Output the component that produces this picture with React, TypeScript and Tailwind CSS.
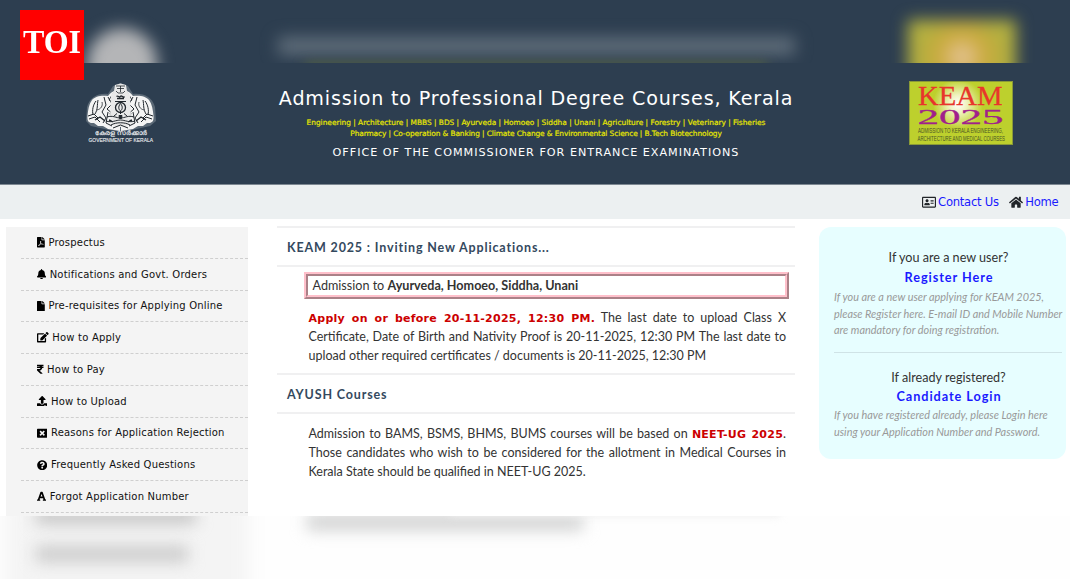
import type { ReactNode } from 'react';
import type { IconType } from 'react-icons';
import {
  FaBell,
  FaEdit,
  FaFile,
  FaFilePdf,
  FaFont,
  FaHome,
  FaQuestionCircle,
  FaRegAddressCard,
  FaRupeeSign,
  FaUpload,
  FaWindowClose,
} from 'react-icons/fa';

const menu: { icon: IconType; width: string; label: string }[] = [
  { icon: FaFilePdf, width: 'w-[7.8px]', label: 'Prospectus' },
  { icon: FaBell, width: 'w-[9.1px]', label: 'Notifications and Govt. Orders' },
  { icon: FaFile, width: 'w-[7.8px]', label: 'Pre-requisites for Applying Online' },
  { icon: FaEdit, width: 'w-[11.7px]', label: 'How to Apply' },
  { icon: FaRupeeSign, width: 'w-[6.5px]', label: 'How to Pay' },
  { icon: FaUpload, width: 'w-[10.4px]', label: 'How to Upload' },
  { icon: FaWindowClose, width: 'w-[10.4px]', label: 'Reasons for Application Rejection' },
  { icon: FaQuestionCircle, width: 'w-[10.4px]', label: 'Frequently Asked Questions' },
  { icon: FaFont, width: 'w-[9.1px]', label: 'Forgot Application Number' },
];

function ElephantSide() {
  return (
    <g>
      <path
        d="M31 7C27 8 24 10 22 13C16 12 9 13 6 17C3 21 2 27 1.5 33C1 38 3 40 6 40L8 40L12 43L17 43L22 46L34 48V8Z"
        fill="#f4f4f4"
      />
      <g fill="none" stroke="#20262c" strokeWidth="1">
        <path d="M10 18C7 22 6 27 7 32M12 17C11 22 12 26 9 31M18 14L20 22L16 29L20 35M22 14L26 21L21 26L27 31M28 9L26 13M2 33L8 31L12 35M3 36L9 34L14 39M20 35L17 40M22 29L20 40L26 43M27 24L24 31L29 37" />
        <path d="M16 19C17 23 15 26 11 27M26 12L23 17L30 22" strokeWidth="0.8" />
        <path d="M9 37L14 34L19 38M23 37L30 40" strokeWidth="1.4" />
      </g>
    </g>
  );
}

function StateEmblem() {
  return (
    <svg viewBox="0 0 70 62" className="h-[62px] w-[70px] overflow-visible" aria-label="Government of Kerala">
      <g opacity="0.3" fill="#c8cdd2">
        <path d="M27 3L34.5 0L42 3L47 11C58 10 66 14 69 24L70 38L64 43L46 47L34.5 49L23 47L5 43L0 38L1 24C4 14 12 10 22 11Z" />
      </g>
      <ElephantSide />
      <g transform="translate(69 0) scale(-1 1)">
        <ElephantSide />
      </g>
      <path d="M29 2L34.5 0.5L40 2L41 8L44 12L45 34L40 44H29L24 34L25 12L28 8Z" fill="#e9e9e9" />
      <g fill="none" stroke="#20262c" strokeWidth="1">
        <path d="M30 3H39M31 5.5H38M30 8L32 10H37L39 8M34.5 3V9" strokeWidth="0.8" />
        <path d="M30.5 13.5C32 11.8 33.5 15.5 34.5 13.3C36 11.8 37 15.5 38.5 13.5M31 15.5H38" strokeWidth="1.3" />
        <path d="M29 18.5H40" />
        <circle cx="34.5" cy="24.5" r="5" strokeWidth="1.3" />
        <path d="M34.5 20.5C31.5 24 33 27 34.5 28C36 27 37.5 24 34.5 20.5ZM34.5 28V31M31 30.5L28 33M38 30.5L41 33" />
        <path d="M21 34C27 32 30 35 34.5 35C39 35 42 32 48 34M20 38C26 40 30 37 34.5 37C39 37 43 40 49 38M25 42C30 39 39 39 44 42" />
        <path d="M33 32.5H36L35.5 35.5H33.5Z" fill="#20262c" />
        <path d="M27 45L34.5 42L42 45" />
      </g>
      <text x="9" y="52.4" textLength="52" lengthAdjust="spacingAndGlyphs" fontSize="6.6" fill="#eef0f2" stroke="#eef0f2" strokeWidth="0.15" fontFamily="sans-serif">
        കേരള സർക്കാർ
      </text>
      <text x="2.5" y="59.2" textLength="64.5" lengthAdjust="spacingAndGlyphs" fontSize="6" fill="#eef0f2" stroke="#eef0f2" strokeWidth="0.12" fontFamily="Liberation Sans, sans-serif">
        GOVERNMENT OF KERALA
      </text>
    </svg>
  );
}

function KeamBadge() {
  return (
    <svg viewBox="0 0 104 64" className="h-16 w-[104px] overflow-visible" aria-label="KEAM 2025">
      <defs>
        <radialGradient id="glow" gradientUnits="userSpaceOnUse" cx="49" cy="23" r="25">
          <stop offset="0" stopColor="#ffffff" />
          <stop offset="0.35" stopColor="#f0f3c0" />
          <stop offset="1" stopColor="#bdd02d" />
        </radialGradient>
      </defs>
      <rect x="0.4" y="0.4" width="103.2" height="63.2" fill="url(#glow)" stroke="#8c9c38" strokeWidth="0.8" />
      <text x="9" y="24" textLength="84.5" lengthAdjust="spacingAndGlyphs" fontSize="28" fill="#e8352b" stroke="#e8352b" strokeWidth="0.3" fontFamily="Liberation Serif, serif">
        KEAM
      </text>
      <text x="8.5" y="42.7" textLength="86" lengthAdjust="spacingAndGlyphs" fontSize="20" fill="#a0208c" stroke="#a0208c" strokeWidth="0.3" fontFamily="Liberation Serif, serif">
        2025
      </text>
      <g fontSize="6.4" fill="#4a5526" fontFamily="Liberation Sans, sans-serif">
        <text x="9" y="52.2" textLength="85" lengthAdjust="spacingAndGlyphs">
          ADMISSION TO KERALA ENGINEERING,
        </text>
        <text x="8.5" y="60" textLength="87.5" lengthAdjust="spacingAndGlyphs">
          ARCHITECTURE AND MEDICAL COURSES
        </text>
      </g>
    </svg>
  );
}

function TopBlur() {
  return (
    <div className="relative h-[63px] overflow-hidden">
      <div className="absolute top-[28px] left-[87px] h-[80px] w-[70px] rounded-[35px] bg-[#b4b5b7] blur-[8px]" />
      <div className="absolute top-[37px] left-[278px] h-[18px] w-[517px] bg-[#5f6d7a] blur-[8px]" />
      <div className="absolute top-[64px] left-[305px] h-[12px] w-[462px] bg-[#5c6a3c] blur-[6px]" />
      <div className="absolute top-[20px] left-[908px] h-[80px] w-[108px] bg-[radial-gradient(circle_at_50%_46%,#e8c8a4_0,#cba93c_34%,#b3b040_62%)] blur-[8px]" />
    </div>
  );
}

function BottomBlur() {
  return (
    <div className="relative h-[63px] overflow-hidden bg-[#fefefe]">
      <div className="absolute -top-5 left-[6px] h-[110px] w-[242px] bg-[#f4f4f4] blur-[10px]" />
      <div className="absolute -top-[6px] left-[36px] h-[13px] w-[160px] bg-[#bdbdbd] blur-[8px]" />
      <div className="absolute top-[30px] left-[36px] h-[16px] w-[152px] bg-[#cacaca] blur-[8px]" />
      <div className="absolute -top-[2px] left-[307px] h-[16px] w-[276px] bg-[#cfd0d0] blur-[8px]" />
      <div className="absolute -top-[9px] left-[450px] h-[9px] w-[330px] bg-[#eeeeee] blur-[4px]" />
    </div>
  );
}

function Line({ children }: { children: ReactNode }) {
  return <div className="h-[19px] [text-align-last:justify]">{children}</div>;
}

function SectionTitle({ children }: { children: ReactNode }) {
  return (
    <h2 className="h-[41px] border-y-2 border-[#f0f0f1] pl-[10px] text-[12.5px] leading-[39px] font-bold tracking-[0.85px] text-[#34495e]">
      {children}
    </h2>
  );
}

function Hot({ children }: { children: ReactNode }) {
  return (
    <b className="font-['DejaVu_Sans',sans-serif] text-[11px] leading-none tracking-[0.25px] text-[#cc0000]">
      {children}
    </b>
  );
}

export default function App() {
  return (
    <div className="relative h-[579px] w-[1070px] overflow-hidden bg-white font-['Lato',sans-serif] text-[#333]">
      <div className="h-[184px] bg-[#2d3e50]">
        <TopBlur />
        <header className="grid h-[121px] grid-cols-[243px_586px_241px] bg-[#2d3e50] font-['DejaVu_Sans',sans-serif] text-white">
          <div className="flex justify-center pt-[20px] pr-px">
            <StateEmblem />
          </div>
          <div className="pt-[24px] text-center whitespace-nowrap">
            <h1 className="text-[19.1px] leading-6 tracking-[0.84px]">Admission to Professional Degree Courses, Kerala</h1>
            <div className="mt-[6px] text-[7.4px] leading-[11px] text-[#e6e600] [-webkit-text-stroke:0.2px_#e6e600]">
              <div>
                Engineering | Architecture | MBBS | BDS | Ayurveda | Homoeo | Siddha | Unani | Agriculture | Forestry |
                Veterinary | Fisheries
              </div>
              <div className="tracking-[-0.09px]">
                Pharmacy | Co-operation &amp; Banking | Climate Change &amp; Environmental Science | B.Tech Biotechnology
              </div>
            </div>
            <div className="mt-[6px] text-[11.2px] leading-4 tracking-[0.98px]">
              OFFICE OF THE COMMISSIONER FOR ENTRANCE EXAMINATIONS
            </div>
          </div>
          <div className="flex justify-end pt-[18px] pr-[57px]">
            <KeamBadge />
          </div>
        </header>
      </div>

      <nav className="flex h-[35px] items-center justify-end gap-[10px] border-t border-[#7d8892] bg-[#ecf0f1] pt-[2px] pr-[11.5px] font-['DejaVu_Sans',sans-serif] text-[11.6px] tracking-[-0.26px] text-[#1a1aff]">
        <a className="flex items-center gap-[2.5px]">
          <FaRegAddressCard className="-mt-px h-[12.5px] w-[14px] text-[#212529]" />
          Contact Us
        </a>
        <a className="flex items-center gap-[2.5px]">
          <FaHome className="-mt-px h-[12.5px] w-[14px] text-[#212529]" />
          Home
        </a>
      </nav>

      <div className="flex h-[297px] items-start pt-[8px]">
        <aside className="ml-[6px] h-[289px] w-[242px] overflow-hidden bg-[#f4f4f4] pl-[15px]">
          {menu.map(({ icon: Icon, width, label }) => (
            <div
              key={label}
              className="flex h-[31.78px] items-center gap-[3.6px] border-b border-dashed border-[#cfcfcf] pl-[16px] font-['DejaVu_Sans',sans-serif] text-[10px] tracking-[0.2px] whitespace-nowrap text-[#111]"
            >
              <Icon className={`h-[10.4px] shrink-0 text-black ${width}`} />
              {label}
            </div>
          ))}
        </aside>

        <main className="-mt-px ml-[29px] w-[518px] text-[12.5px] leading-[19px]">
          <SectionTitle>KEAM 2025 : Inviting New Applications...</SectionTitle>
          <div className="mt-[5px] ml-[27px] h-[27px] w-[485px] border-4 border-[pink] pl-[4.5px] text-[12.6px] [border-style:ridge]">
            Admission to <b>Ayurveda, Homoeo, Siddha, Unani</b>
          </div>
          <div className="mt-[9px] ml-[31.5px] w-[477.5px] whitespace-nowrap">
            <Line>
              <Hot>Apply on or before 20-11-2025, 12:30 PM.</Hot> The last date to upload Class X
            </Line>
            <Line>Certificate, Date of Birth and Nativity Proof is 20-11-2025, 12:30 PM The last date to</Line>
            <div>upload other required certificates / documents is 20-11-2025, 12:30 PM</div>
          </div>
          <div className="mt-[8px]">
            <SectionTitle>AYUSH Courses</SectionTitle>
          </div>
          <div className="mt-[10px] ml-[31.5px] w-[477.5px] whitespace-nowrap">
            <Line>
              Admission to BAMS, BSMS, BHMS, BUMS courses will be based on <Hot>NEET-UG 2025</Hot>.
            </Line>
            <Line>Those candidates who wish to be considered for the allotment in Medical Courses in</Line>
            <div>Kerala State should be qualified in NEET-UG 2025.</div>
          </div>
        </main>

        <section className="ml-[24px] h-[232px] w-[247px] rounded-[12px] bg-[#e7feff] pt-[21px] pr-[4px] pl-[15px] text-[12.6px] leading-[19px] whitespace-nowrap">
          <div className="pl-px text-center">If you are a new user?</div>
          <div className="mt-px pl-[2px] text-center text-[12.7px] font-bold tracking-[0.93px] text-[#1a1aff]">
            Register Here
          </div>
          <p className="mt-[2px] text-[10.9px] leading-[16.7px] text-[#999] italic">
            If you are a new user applying for KEAM 2025,
            <br />
            please Register here. E-mail ID and Mobile Number
            <br />
            are mandatory for doing registration.
          </p>
          <div className="mt-[13px] border-t border-[#cfe3e6]" />
          <div className="mt-[15px] pl-px text-center">If already registered?</div>
          <div className="pl-[2px] text-center text-[12.7px] font-bold tracking-[0.93px] text-[#1a1aff]">
            Candidate Login
          </div>
          <p className="mt-px text-[10.9px] leading-[16.7px] text-[#999] italic">
            If you have registered already, please Login here
            <br />
            using your Application Number and Password.
          </p>
        </section>
      </div>

      <BottomBlur />

      <div className="absolute top-[10px] left-[20px] flex h-[70px] w-16 items-center justify-center bg-[#ff0000] pb-[6px] font-['Liberation_Serif',serif] text-[33px] leading-none font-bold text-white">
        <span className="scale-x-[0.97]">TOI</span>
      </div>
    </div>
  );
}
